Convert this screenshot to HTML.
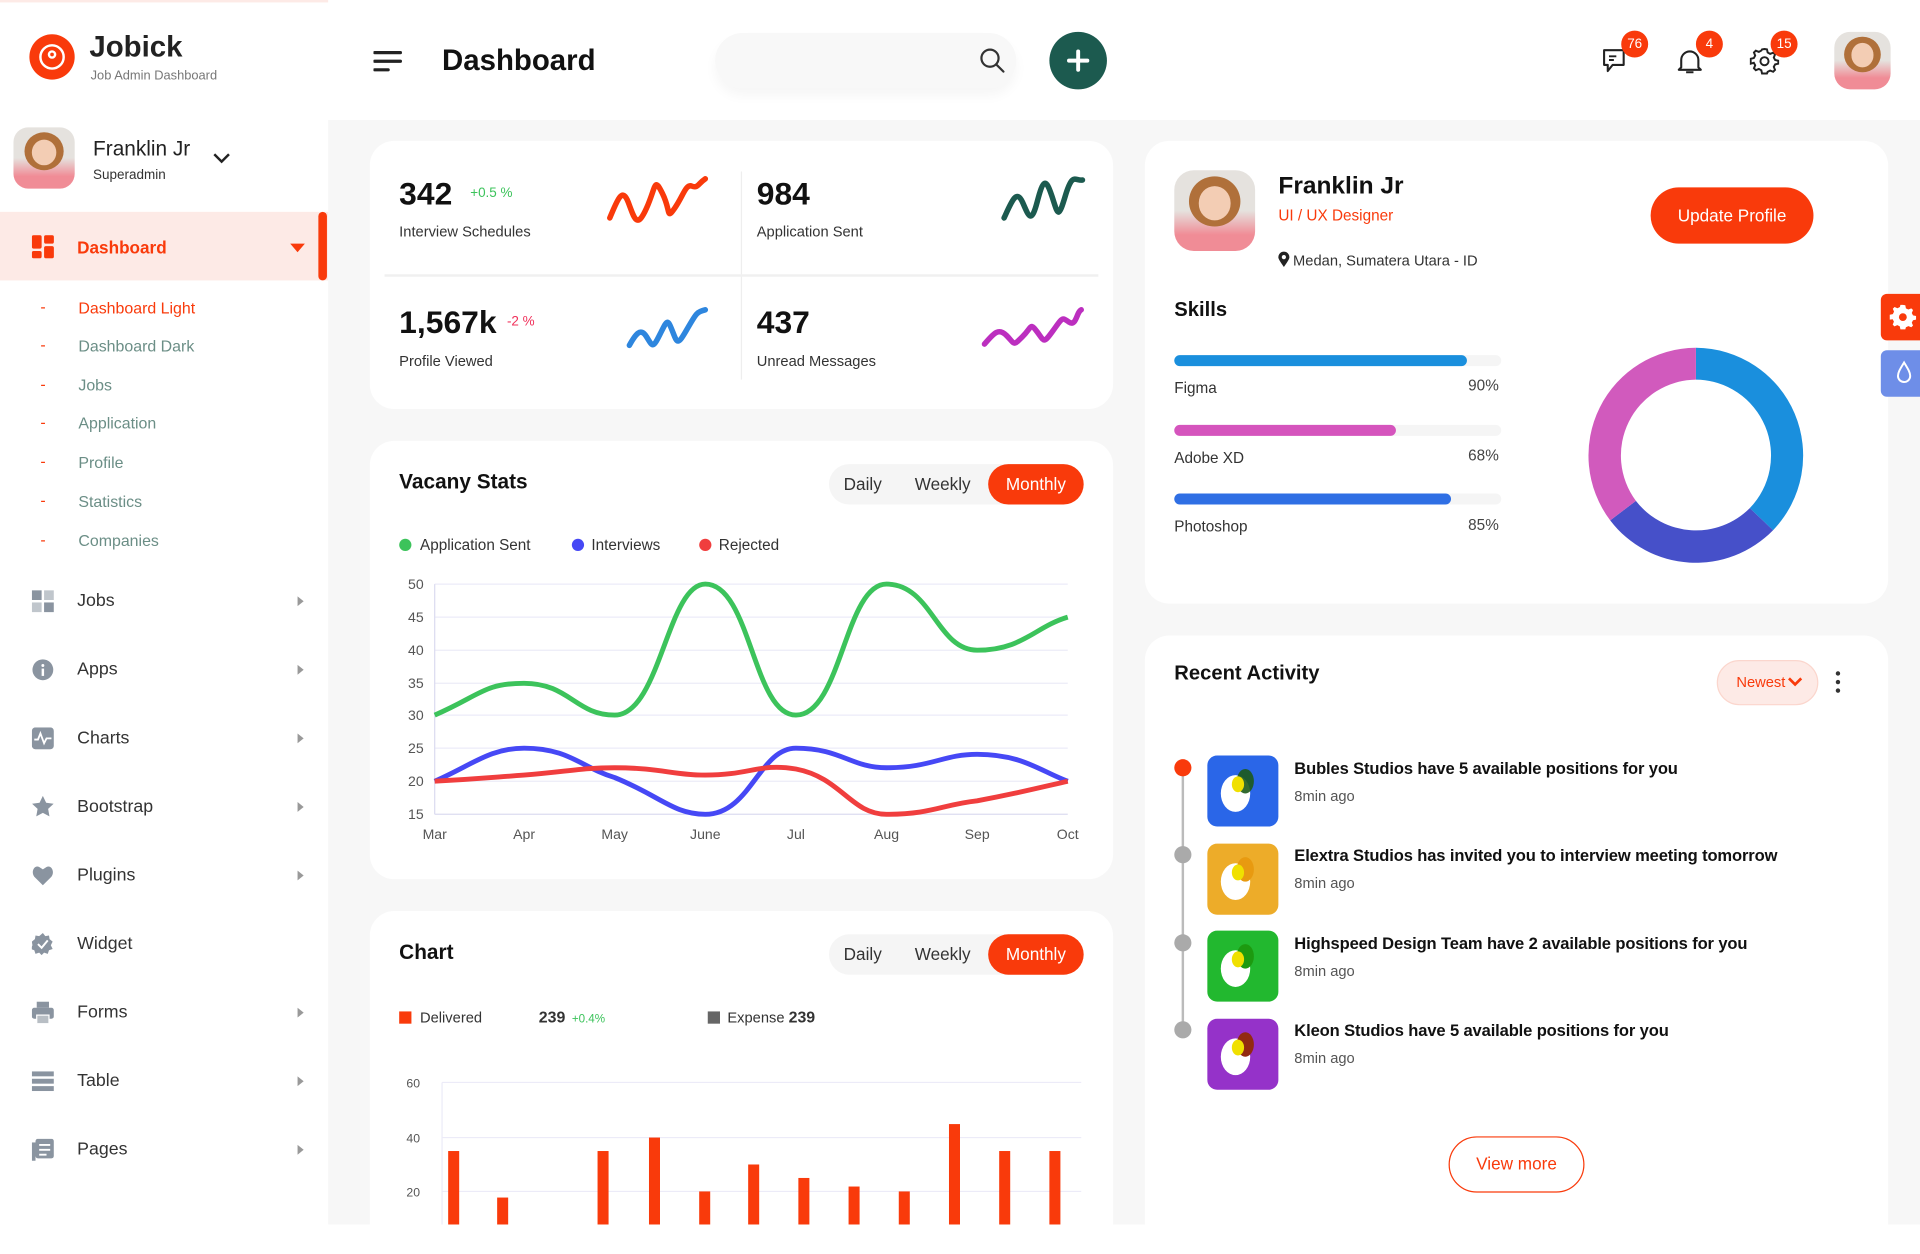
<!DOCTYPE html>
<html><head><meta charset="utf-8"><style>
*{margin:0;padding:0;box-sizing:border-box}
html,body{width:1920px;height:1200px;overflow:hidden;background:#fff}
#w{position:absolute;left:0;top:0;width:1568px;height:980px;transform:scale(1.22449);transform-origin:0 0;font-family:"Liberation Sans",sans-serif;color:#222}
.a{position:absolute;white-space:nowrap}
.card{position:absolute;background:#fff;border-radius:20px}
.sub{position:absolute;left:33px;font-size:13px;color:#6b8e86;white-space:nowrap}
.sub b{position:absolute;left:0;color:#f93a0b;font-weight:normal}
.sub span{position:absolute;left:31px;top:-8px;white-space:nowrap}
.mi{position:absolute;left:26px;font-size:14.5px;color:#333;width:230px;height:20px}
.mi i{position:absolute;left:0;top:0;width:18px;height:18px}
.mi span{position:absolute;left:37px;top:1px;white-space:nowrap}
.mi em{position:absolute;right:8px;top:5px;border-left:5px solid #999;border-top:4px solid transparent;border-bottom:4px solid transparent}
.tg{position:absolute;width:208px;height:33px;border-radius:17px;background:#f5f5f5;font-size:14px;color:#333}
.tg span{position:absolute;top:8px}
.tg b{position:absolute;right:0;top:0;width:78px;height:33px;border-radius:17px;background:#f93a0b;color:#fff;font-weight:normal;text-align:center;line-height:33px}
.badge{position:absolute;width:22px;height:22px;border-radius:50%;background:#f93a0b;color:#fff;font-size:11px;text-align:center;line-height:22px}
.av{position:absolute;border-radius:14px;overflow:hidden;background:linear-gradient(#e5e2de 0,#e5e2de 50%,#f08c96 80%)}
.av:before{content:"";position:absolute;left:18%;top:8%;width:64%;height:62%;border-radius:50%;background:#b0703a}
.av:after{content:"";position:absolute;left:30%;top:20%;width:40%;height:42%;border-radius:50%;background:#f3cdb4}
.ai{position:absolute;left:986px;width:58px;height:58px;border-radius:8px}
.ai:before{content:"";position:absolute;left:11px;top:16px;width:24px;height:30px;border-radius:50%;background:#fff}
.at{position:absolute;left:1057px;font-size:13.5px;color:#111;font-weight:bold;letter-spacing:-.1px;white-space:nowrap}
.ag{position:absolute;left:1057px;font-size:12px;color:#555}
.td{position:absolute;left:959px;width:14px;height:14px;border-radius:50%;background:#aaa}
</style></head><body><div id="w">
<div class="a" style="left:0;top:0;width:268px;height:1000px;background:#fff"></div>
<div class="a" style="left:0;top:0;width:268px;height:2px;background:#fdeae6"></div>
<div class="a" style="left:24px;top:28px;width:37px;height:37px;border-radius:50%;background:#f93a0b"></div>
<div class="a" style="left:32px;top:36px;width:21px;height:21px;border-radius:50%;border:2.5px solid #fff"></div>
<div class="a" style="left:39px;top:41px;width:7px;height:7px;border-radius:50%;border:2px solid #fff"></div>
<div class="a" style="left:73px;top:25px;font-size:24px;font-weight:bold;color:#222">Jobick</div>
<div class="a" style="left:74px;top:56px;font-size:10.5px;color:#777">Job Admin Dashboard</div>
<div class="av" style="left:11px;top:104px;width:50px;height:50px;border-radius:12px"></div>
<div class="a" style="left:76px;top:112px;font-size:17px;color:#222">Franklin Jr</div>
<div class="a" style="left:76px;top:137px;font-size:11px;color:#333">Superadmin</div>
<svg class="a" style="left:173px;top:123px" width="16" height="12"><path d="M2 3l6 6 6-6" fill="none" stroke="#222" stroke-width="2"/></svg>
<div class="a" style="left:0;top:173px;width:268px;height:56px;background:#fdeae6"></div>
<div class="a" style="left:260px;top:173px;width:7px;height:56px;border-radius:4px;background:#f93a0b"></div>
<svg class="a" style="left:26px;top:192px" width="19" height="19"><rect x="0" y="0" width="8" height="11" rx="1.5" fill="#f93a0b"/><rect x="10" y="0" width="8" height="7" rx="1.5" fill="#f93a0b"/><rect x="0" y="13" width="8" height="6" rx="1.5" fill="#f93a0b"/><rect x="10" y="9" width="8" height="10" rx="1.5" fill="#f93a0b"/></svg>
<div class="a" style="left:63px;top:194px;font-size:14px;font-weight:bold;color:#f93a0b">Dashboard</div>
<div class="a" style="left:237px;top:199px;border-top:7px solid #f93a0b;border-left:6px solid transparent;border-right:6px solid transparent"></div>
<div class="sub" style="top:252px"><b style="top:-9px">-</b><span style="color:#f93a0b">Dashboard Light</span></div>
<div class="sub" style="top:283px"><b style="top:-9px">-</b><span>Dashboard Dark</span></div>
<div class="sub" style="top:315px"><b style="top:-9px">-</b><span>Jobs</span></div>
<div class="sub" style="top:346px"><b style="top:-9px">-</b><span>Application</span></div>
<div class="sub" style="top:378px"><b style="top:-9px">-</b><span>Profile</span></div>
<div class="sub" style="top:410px"><b style="top:-9px">-</b><span>Statistics</span></div>
<div class="sub" style="top:442px"><b style="top:-9px">-</b><span>Companies</span></div>
<div class="mi" style="top:482px"><i><svg width="18" height="18"><rect x="0" y="0" width="8" height="8" fill="#8a94a0"/><rect x="10" y="0" width="8" height="8" fill="#c0c6cc"/><rect x="0" y="10" width="8" height="8" fill="#c0c6cc"/><rect x="10" y="10" width="8" height="8" fill="#8a94a0"/></svg></i><span>Jobs</span><em></em></div>
<div class="mi" style="top:538px"><i><svg width="18" height="18"><circle cx="9" cy="9" r="8.5" fill="#8a94a0"/><rect x="8" y="8" width="2" height="6" fill="#fff"/><circle cx="9" cy="5.5" r="1.2" fill="#fff"/></svg></i><span>Apps</span><em></em></div>
<div class="mi" style="top:594px"><i><svg width="18" height="18"><rect x="0" y="0" width="18" height="18" rx="3" fill="#8a94a0"/><path d="M2 10h3l2-5 3 8 2-4h4" fill="none" stroke="#fff" stroke-width="1.5"/></svg></i><span>Charts</span><em></em></div>
<div class="mi" style="top:650px"><i><svg width="18" height="18"><path d="M9 0l2.7 5.6 6.1.8-4.5 4.2 1.1 6.1L9 13.8 3.6 16.7l1.1-6.1L.2 6.4l6.1-.8z" fill="#8a94a0"/></svg></i><span>Bootstrap</span><em></em></div>
<div class="mi" style="top:706px"><i><svg width="18" height="18"><path d="M9 17L2 10C-1 6 2 0 6 2l3 2 3-2c4-2 7 4 4 8z" fill="#8a94a0"/></svg></i><span>Plugins</span><em></em></div>
<div class="mi" style="top:762px"><i><svg width="18" height="18"><path d="M9 0l2 2.5 3-.5.5 3 2.5 2-1.5 3 1.5 3-3 1-1 3-3-1-2 2-2-2-3 1-1-3-3-1 1.5-3L0 7l2.5-2L3 2l3 .5z" fill="#8a94a0"/><path d="M5 9l3 3 5-6" fill="none" stroke="#fff" stroke-width="1.6"/></svg></i><span>Widget</span></div>
<div class="mi" style="top:818px"><i><svg width="18" height="18"><rect x="4" y="0" width="10" height="5" fill="#8a94a0"/><rect x="0" y="5" width="18" height="9" rx="2" fill="#8a94a0"/><rect x="4" y="11" width="10" height="7" fill="#b8bec4" stroke="#fff"/></svg></i><span>Forms</span><em></em></div>
<div class="mi" style="top:874px"><i><svg width="18" height="18"><rect x="0" y="1" width="18" height="4" fill="#8a94a0"/><rect x="0" y="7" width="18" height="4" fill="#8a94a0"/><rect x="0" y="13" width="18" height="4" fill="#8a94a0"/></svg></i><span>Table</span><em></em></div>
<div class="mi" style="top:930px"><i><svg width="18" height="18"><rect x="3" y="0" width="15" height="16" rx="2" fill="#8a94a0"/><rect x="0" y="3" width="3" height="15" fill="#8a94a0"/><path d="M6 5h9M6 9h9M6 13h6" stroke="#fff" stroke-width="1.5"/></svg></i><span>Pages</span><em></em></div>

<div class="a" style="left:268px;top:98px;width:1300px;height:902px;background:#f7f7f7"></div>
<svg class="a" style="left:305px;top:41px" width="24" height="20"><path d="M1 2h21M1 9h21M1 16h11" stroke="#222" stroke-width="2.6" stroke-linecap="round"/></svg>
<div class="a" style="left:361px;top:36px;font-size:24px;font-weight:bold;color:#111">Dashboard</div>
<div class="a" style="left:584px;top:27px;width:246px;height:45px;border-radius:23px;background:#f8f8f8;box-shadow:0 6px 10px rgba(0,0,0,.04)"></div>
<svg class="a" style="left:799px;top:38px" width="24" height="24"><circle cx="9.5" cy="9.5" r="7" fill="none" stroke="#333" stroke-width="1.8"/><path d="M14.5 14.5l6 6" stroke="#333" stroke-width="1.8" stroke-linecap="round"/></svg>
<div class="a" style="left:857px;top:26px;width:47px;height:47px;border-radius:50%;background:#1c5a4f"></div>
<svg class="a" style="left:870px;top:39px" width="21" height="21"><path d="M10.5 3v15M3 10.5h15" stroke="#fff" stroke-width="3.2" stroke-linecap="round"/></svg>
<svg class="a" style="left:1307px;top:38px" width="24" height="24"><path d="M3 3h16v12H10l-4 5v-5H3z" fill="none" stroke="#222" stroke-width="1.7" stroke-linejoin="round"/><path d="M7 8h6M7 11h4" stroke="#222" stroke-width="1.6"/></svg>
<div class="badge" style="left:1324px;top:25px">76</div>
<svg class="a" style="left:1368px;top:38px" width="24" height="24"><path d="M5 17V11a7 7 0 0114 0v6l2 2H3z" fill="none" stroke="#222" stroke-width="1.7" stroke-linejoin="round"/><path d="M9 21h6" stroke="#222" stroke-width="1.7"/></svg>
<div class="badge" style="left:1385px;top:25px">4</div>
<svg class="a" style="left:1429px;top:38px" width="24" height="24"><path d="M12 2l2 .3.6 2.6 2 1.1 2.5-1 1.5 1.5-1 2.5 1.1 2 2.6.6V14l-2.6.6-1.1 2 1 2.5-1.5 1.5-2.5-1-2 1.1L14 22h-4l-.6-2.6-2-1.1-2.5 1-1.5-1.5 1-2.5-1.1-2L.7 14v-4l2.6-.6 1.1-2-1-2.5 1.5-1.5 2.5 1 2-1.1L10 2.3z" fill="none" stroke="#222" stroke-width="1.6"/><circle cx="12" cy="12" r="3.3" fill="none" stroke="#222" stroke-width="1.6"/></svg>
<div class="badge" style="left:1446px;top:25px">15</div>
<div class="av" style="left:1498px;top:26px;width:46px;height:47px;border-radius:13px"></div>

<div class="card" style="left:302px;top:115px;width:607px;height:219px"></div>
<div class="a" style="left:605px;top:140px;width:1px;height:170px;background:#eee"></div>
<div class="a" style="left:314px;top:224px;width:583px;height:2px;background:#f0f0f0"></div>
<div class="a" style="left:326px;top:143px;font-size:26px;font-weight:bold;color:#111">342</div>
<div class="a" style="left:384px;top:152px;font-size:11px;color:#3cc35b">+0.5 %</div>
<div class="a" style="left:326px;top:182px;font-size:12px;color:#333">Interview Schedules</div>
<div class="a" style="left:618px;top:143px;font-size:26px;font-weight:bold;color:#111">984</div>
<div class="a" style="left:618px;top:182px;font-size:12px;color:#333">Application Sent</div>
<div class="a" style="left:326px;top:248px;font-size:26px;font-weight:bold;color:#111">1,567k</div>
<div class="a" style="left:414px;top:257px;font-size:11px;color:#f0305a">-2 %</div>
<div class="a" style="left:326px;top:288px;font-size:12px;color:#333">Profile Viewed</div>
<div class="a" style="left:618px;top:248px;font-size:26px;font-weight:bold;color:#111">437</div>
<div class="a" style="left:618px;top:288px;font-size:12px;color:#333">Unread Messages</div>
<svg class="a" style="left:490px;top:140px" width="100" height="50"><path d="M8 38C14 24 18 12 23 25S30 48 38 30 44 4 51 18 54 40 61 30 70 10 75 12 80 10 86 6" fill="none" stroke="#f93a0b" stroke-width="4.5" stroke-linecap="round"/></svg>
<svg class="a" style="left:812px;top:140px" width="80" height="50"><path d="M8 38C14 25 18 14 23 25S30 44 35 25 42 5 47 20 52 40 58 20 66 8 72 7" fill="none" stroke="#1c5a4f" stroke-width="4.5" stroke-linecap="round"/></svg>
<svg class="a" style="left:505px;top:245px" width="80" height="45"><path d="M9 37C14 28 18 22 23 30S28 40 34 28 40 15 44 25 48 38 56 24 64 10 71 8" fill="none" stroke="#2e86de" stroke-width="4.5" stroke-linecap="round"/></svg>
<svg class="a" style="left:795px;top:245px" width="95" height="45"><path d="M9 36C16 28 20 22 27 29S32 38 40 30 46 18 52 26 57 36 65 25 72 14 78 18 84 10 88 8" fill="none" stroke="#bc2fbf" stroke-width="4.5" stroke-linecap="round"/></svg>

<div class="card" style="left:302px;top:360px;width:607px;height:358px"></div>
<div class="a" style="left:326px;top:384px;font-size:17px;font-weight:bold;color:#111">Vacany Stats</div>
<div class="tg" style="left:677px;top:379px"><span style="left:12px">Daily</span><span style="left:70px">Weekly</span><b>Monthly</b></div>
<svg class="a" style="left:320px;top:430px" width="590" height="270" font-family="Liberation Sans" font-size="11.5" fill="#555">
<circle cx="11" cy="15" r="5" fill="#3cc35b"/><text x="23" y="19" fill="#333" font-size="12.5">Application Sent</text>
<circle cx="152" cy="15" r="5" fill="#4648f5"/><text x="163" y="19" fill="#333" font-size="12.5">Interviews</text>
<circle cx="256" cy="15" r="5" fill="#f03e3e"/><text x="267" y="19" fill="#333" font-size="12.5">Rejected</text>
<g transform="translate(-320,-430)">
<g stroke="#ecebf8" stroke-width="1"><path d="M355 477H872M355 504H872M355 531H872M355 558H872M355 584H872M355 611H872M355 638H872"/><path d="M355 665H872M355 477V665" stroke="#dcdcf0"/></g>
<g text-anchor="end"><text x="346" y="481">50</text><text x="346" y="508">45</text><text x="346" y="535">40</text><text x="346" y="562">35</text><text x="346" y="588">30</text><text x="346" y="615">25</text><text x="346" y="642">20</text><text x="346" y="669">15</text></g>
<g text-anchor="middle"><text x="355" y="685">Mar</text><text x="428" y="685">Apr</text><text x="502" y="685">May</text><text x="576" y="685">June</text><text x="650" y="685">Jul</text><text x="724" y="685">Aug</text><text x="798" y="685">Sep</text><text x="872" y="685">Oct</text></g>
<path d="M355,584 C392,568 395,558 428,558 C465,558 470,584 502,584 C539,584 545,477 576,477 C613,477 615,584 650,584 C687,584 690,477 724,477 C761,477 765,531 798,531 C835,531 845,512 872,504" fill="none" stroke="#3cc35b" stroke-width="4"/>
<path d="M355,638 C385,625 400,611 428,611 C465,611 475,627 502,635 C539,650 550,665 576,665 C613,665 620,611 650,611 C687,611 695,627 724,627 C761,627 770,616 798,616 C835,616 850,630 872,638" fill="none" stroke="#4648f5" stroke-width="4"/>
<path d="M355,638 C392,636 400,635 428,633 C465,630 475,627 502,627 C539,627 550,633 576,633 C613,633 620,623 650,628 C687,635 695,665 724,665 C761,665 770,657 798,654 C835,647 850,643 872,638" fill="none" stroke="#f03e3e" stroke-width="4"/>
</g></svg>

<div class="card" style="left:302px;top:744px;width:607px;height:280px"></div>
<div class="a" style="left:326px;top:768px;font-size:17px;font-weight:bold;color:#111">Chart</div>
<div class="tg" style="left:677px;top:763px"><span style="left:12px">Daily</span><span style="left:70px">Weekly</span><b>Monthly</b></div>
<svg class="a" style="left:0;top:0" width="910" height="1000" font-family="Liberation Sans">
<rect x="326" y="826" width="10" height="10" fill="#f93a0b"/><text x="343" y="835" font-size="12" fill="#333">Delivered</text>
<text x="440" y="835" font-size="13" font-weight="bold" fill="#333">239</text><text x="467" y="835" font-size="9.5" fill="#3cc35b">+0.4%</text>
<rect x="578" y="826" width="10" height="10" fill="#666"/><text x="594" y="835" font-size="12" fill="#333">Expense <tspan font-weight="bold" font-size="13">239</tspan></text>
<g stroke="#ecebf8"><path d="M361 884H883M361 929H883M361 973H883M361 884V1000"/></g>
<g font-size="10" fill="#555" text-anchor="end"><text x="343" y="888">60</text><text x="343" y="933">40</text><text x="343" y="977">20</text></g>
<g fill="#f93a0b"><rect x="366" y="940" width="9" height="60"/><rect x="406" y="978" width="9" height="22"/><rect x="488" y="940" width="9" height="60"/><rect x="530" y="929" width="9" height="71"/><rect x="571" y="973" width="9" height="27"/><rect x="611" y="951" width="9" height="49"/><rect x="652" y="962" width="9" height="38"/><rect x="693" y="969" width="9" height="31"/><rect x="734" y="973" width="9" height="27"/><rect x="775" y="918" width="9" height="82"/><rect x="816" y="940" width="9" height="60"/><rect x="857" y="940" width="9" height="60"/></g>
</svg>

<div class="card" style="left:935px;top:115px;width:607px;height:378px"></div>
<div class="av" style="left:959px;top:139px;width:66px;height:66px;border-radius:16px"></div>
<div class="a" style="left:1044px;top:141px;font-size:20px;font-weight:bold;color:#111">Franklin Jr</div>
<div class="a" style="left:1044px;top:169px;font-size:12.5px;color:#f93a0b">UI / UX Designer</div>
<svg class="a" style="left:1043px;top:205px" width="11" height="14"><path d="M5.5 13C2 8 1 6.5 1 5a4.5 4.5 0 019 0c0 1.5-1 3-4.5 8z" fill="#222"/><circle cx="5.5" cy="5" r="1.7" fill="#fff"/></svg>
<div class="a" style="left:1056px;top:206px;font-size:12px;color:#333">Medan, Sumatera Utara - ID</div>
<div class="a" style="left:1348px;top:153px;width:133px;height:46px;border-radius:23px;background:#f93a0b;color:#fff;font-size:14px;text-align:center;line-height:46px">Update Profile</div>
<div class="a" style="left:959px;top:244px;font-size:16.5px;font-weight:bold;color:#111">Skills</div>
<div class="a" style="left:959px;top:290px;width:267px;height:9px;border-radius:5px;background:#f5f5f5"><div style="width:239px;height:9px;border-radius:5px;background:#1a8fdd"></div></div>
<div class="a" style="left:959px;top:310px;font-size:12.5px;color:#333">Figma</div>
<div class="a" style="left:1199px;top:308px;font-size:12.5px;color:#444">90%</div>
<div class="a" style="left:959px;top:347px;width:267px;height:9px;border-radius:5px;background:#f5f5f5"><div style="width:181px;height:9px;border-radius:5px;background:#d554bd"></div></div>
<div class="a" style="left:959px;top:367px;font-size:12.5px;color:#333">Adobe XD</div>
<div class="a" style="left:1199px;top:365px;font-size:12.5px;color:#444">68%</div>
<div class="a" style="left:959px;top:403px;width:267px;height:9px;border-radius:5px;background:#f5f5f5"><div style="width:226px;height:9px;border-radius:5px;background:#2f6fe4"></div></div>
<div class="a" style="left:959px;top:423px;font-size:12.5px;color:#333">Photoshop</div>
<div class="a" style="left:1199px;top:422px;font-size:12.5px;color:#444">85%</div>
<svg class="a" style="left:1290px;top:277px" width="190" height="190"><g transform="translate(95,95)">
<path d="M0,-88 A88,88 0 0 1 63,61 L44,43 A62,62 0 0 0 0,-62Z" fill="#1a8fdd"/>
<path d="M63,61 A88,88 0 0 1 -70,53 L-49,37 A62,62 0 0 0 44,43Z" fill="#4650c9"/>
<path d="M-70,53 A88,88 0 0 1 0,-88 L0,-62 A62,62 0 0 0 -49,37Z" fill="#d15abd"/>
</g></svg>
<div class="a" style="left:1536px;top:240px;width:34px;height:38px;border-radius:5px 0 0 5px;background:#f93a0b"></div>
<svg class="a" style="left:1543px;top:248px" width="22" height="22"><path d="M11 1l2 .3.5 2.5 2 1 2.4-1 1.4 1.4-1 2.4 1 2 2.5.5V13l-2.5.5-1 2 1 2.4-1.4 1.4-2.4-1-2 1L13 21h-4l-.5-2.5-2-1-2.4 1-1.4-1.4 1-2.4-1-2L.3 13V9l2.5-.5 1-2-1-2.4L4.2 2.7l2.4 1 2-1L9 1z" fill="#fff"/><circle cx="11" cy="11" r="3.2" fill="#f93a0b"/></svg>
<div class="a" style="left:1536px;top:286px;width:34px;height:38px;border-radius:5px 0 0 5px;background:#6e8ee8"></div>
<svg class="a" style="left:1547px;top:294px" width="16" height="22"><path d="M8 2C5 7 3 10 3 13a5 5 0 0010 0c0-3-2-6-5-11z" fill="none" stroke="#fff" stroke-width="1.6"/></svg>

<div class="card" style="left:935px;top:519px;width:607px;height:500px"></div>
<div class="a" style="left:959px;top:541px;font-size:16.5px;font-weight:bold;color:#111">Recent Activity</div>
<div class="a" style="left:1402px;top:539px;width:83px;height:37px;border-radius:19px;background:#fdeae6;border:1px solid #fbd6cd;color:#f93a0b;font-size:12px;line-height:35px;padding-left:15px">Newest<svg width="12" height="9" style="margin-left:2px"><path d="M1 2l5 5 5-5" fill="none" stroke="#f93a0b" stroke-width="2.2"/></svg></div>
<svg class="a" style="left:1497px;top:547px" width="8" height="20"><circle cx="4" cy="3" r="1.8" fill="#333"/><circle cx="4" cy="10" r="1.8" fill="#333"/><circle cx="4" cy="17" r="1.8" fill="#333"/></svg>
<div class="a" style="left:965px;top:630px;width:1.5px;height:212px;background:#bbb"></div>
<div class="td" style="top:620px;background:#f93a0b"></div>
<div class="td" style="top:691px"></div>
<div class="td" style="top:763px"></div>
<div class="td" style="top:834px"></div>
<div class="ai" style="top:617px;background:#2a66e8"></div><div class="a" style="left:1010px;top:628px;width:14px;height:20px;border-radius:50%;background:#1d5a1a;opacity:.9"></div><div class="a" style="left:1006px;top:634px;width:10px;height:13px;border-radius:50%;background:#f0e000"></div>
<div class="ai" style="top:689px;background:#edac29"></div><div class="a" style="left:1010px;top:700px;width:14px;height:20px;border-radius:50%;background:#e89a10"></div><div class="a" style="left:1006px;top:706px;width:10px;height:13px;border-radius:50%;background:#f0e000"></div>
<div class="ai" style="top:760px;background:#22b82f"></div><div class="a" style="left:1010px;top:771px;width:14px;height:20px;border-radius:50%;background:#1d9a10"></div><div class="a" style="left:1006px;top:777px;width:10px;height:13px;border-radius:50%;background:#f0e000"></div>
<div class="ai" style="top:832px;background:#9532c9"></div><div class="a" style="left:1010px;top:843px;width:14px;height:20px;border-radius:50%;background:#922a10"></div><div class="a" style="left:1006px;top:849px;width:10px;height:13px;border-radius:50%;background:#f0e000"></div>
<div class="at" style="top:620px">Bubles Studios have 5 available positions for you</div><div class="ag" style="top:643px">8min ago</div>
<div class="at" style="top:691px">Elextra Studios has invited you to interview meeting tomorrow</div><div class="ag" style="top:714px">8min ago</div>
<div class="at" style="top:763px">Highspeed Design Team have 2 available positions for you</div><div class="ag" style="top:786px">8min ago</div>
<div class="at" style="top:834px">Kleon Studios have 5 available positions for you</div><div class="ag" style="top:857px">8min ago</div>
<div class="a" style="left:1183px;top:928px;width:111px;height:46px;border-radius:23px;border:1.5px solid #f93a0b;color:#f93a0b;font-size:14px;text-align:center;line-height:43px">View more</div>
</div></body></html>
